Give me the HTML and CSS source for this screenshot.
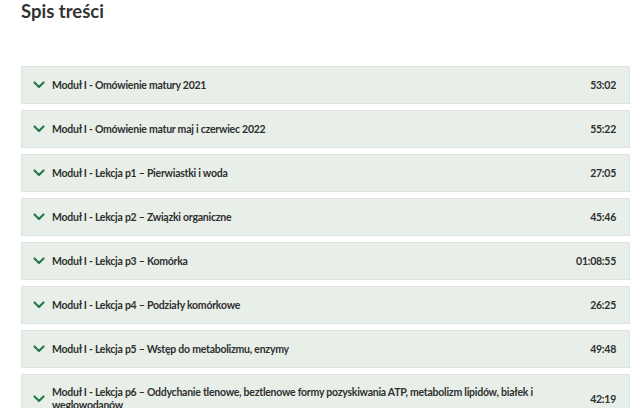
FILE: index.html
```html
<!DOCTYPE html>
<html lang="pl">
<head>
<meta charset="utf-8">
<link rel="stylesheet" href="styles.css">
</head>
<body>
<h2 class="title">Spis treści</h2>
<div class="list">
  <div class="row"><span class="chev"><svg viewBox="0 0 12 8" width="12" height="8"><path d="M1.5 1.5 L6 6 L10.5 1.5" fill="none" stroke="#2b7a4b" stroke-width="2.2" stroke-linecap="round" stroke-linejoin="round"/></svg></span><span class="name">Moduł I - Omówienie matury 2021</span><span class="time">53:02</span></div>
  <div class="row"><span class="chev"><svg viewBox="0 0 12 8" width="12" height="8"><path d="M1.5 1.5 L6 6 L10.5 1.5" fill="none" stroke="#2b7a4b" stroke-width="2.2" stroke-linecap="round" stroke-linejoin="round"/></svg></span><span class="name">Moduł I - Omówienie matur maj i czerwiec 2022</span><span class="time">55:22</span></div>
  <div class="row"><span class="chev"><svg viewBox="0 0 12 8" width="12" height="8"><path d="M1.5 1.5 L6 6 L10.5 1.5" fill="none" stroke="#2b7a4b" stroke-width="2.2" stroke-linecap="round" stroke-linejoin="round"/></svg></span><span class="name">Moduł I - Lekcja p1 – Pierwiastki i woda</span><span class="time">27:05</span></div>
  <div class="row"><span class="chev"><svg viewBox="0 0 12 8" width="12" height="8"><path d="M1.5 1.5 L6 6 L10.5 1.5" fill="none" stroke="#2b7a4b" stroke-width="2.2" stroke-linecap="round" stroke-linejoin="round"/></svg></span><span class="name">Moduł I - Lekcja p2 – Związki organiczne</span><span class="time">45:46</span></div>
  <div class="row"><span class="chev"><svg viewBox="0 0 12 8" width="12" height="8"><path d="M1.5 1.5 L6 6 L10.5 1.5" fill="none" stroke="#2b7a4b" stroke-width="2.2" stroke-linecap="round" stroke-linejoin="round"/></svg></span><span class="name">Moduł I - Lekcja p3 – Komórka</span><span class="time">01:08:55</span></div>
  <div class="row"><span class="chev"><svg viewBox="0 0 12 8" width="12" height="8"><path d="M1.5 1.5 L6 6 L10.5 1.5" fill="none" stroke="#2b7a4b" stroke-width="2.2" stroke-linecap="round" stroke-linejoin="round"/></svg></span><span class="name">Moduł I - Lekcja p4 – Podziały komórkowe</span><span class="time">26:25</span></div>
  <div class="row"><span class="chev"><svg viewBox="0 0 12 8" width="12" height="8"><path d="M1.5 1.5 L6 6 L10.5 1.5" fill="none" stroke="#2b7a4b" stroke-width="2.2" stroke-linecap="round" stroke-linejoin="round"/></svg></span><span class="name">Moduł I - Lekcja p5 – Wstęp do metabolizmu, enzymy</span><span class="time">49:48</span></div>
  <div class="row"><span class="chev"><svg viewBox="0 0 12 8" width="12" height="8"><path d="M1.5 1.5 L6 6 L10.5 1.5" fill="none" stroke="#2b7a4b" stroke-width="2.2" stroke-linecap="round" stroke-linejoin="round"/></svg></span><span class="name">Moduł I - Lekcja p6 – Oddychanie tlenowe, beztlenowe formy pozyskiwania ATP, metabolizm lipidów, białek i węglowodanów</span><span class="time">42:19</span></div>
</div>
</body>
</html>
```
FILE: styles.css
```css
html, body {
  margin: 0;
  padding: 0;
  background: #ffffff;
  overflow: hidden;
}
body {
  font-family: Lato, "Noto Sans", sans-serif;
  color: #2f2f2f;
  padding: 0 10px 0 21px;
}
.title {
  margin: 0;
  font-size: 18.5px;
  font-weight: 700;
  line-height: 22px;
  color: #333333;
}
.list {
  margin-top: 44px;
  display: flex;
  flex-direction: column;
  gap: 6px;
}
.row {
  display: flex;
  align-items: center;
  min-height: 38px;
  box-sizing: border-box;
  background: #e8efe9;
  border: 1px solid #dde5df;
  padding: 11px 13px 11px 11px;
  font-size: 10.5px;
  font-weight: 700;
  line-height: 13px;
  letter-spacing: -0.25px;
}
.chev {
  display: flex;
  width: 19px;
  flex: none;
}
.name {
  flex: 1;
  padding-right: 30px;
}
.time {
  flex: none;
}
```
